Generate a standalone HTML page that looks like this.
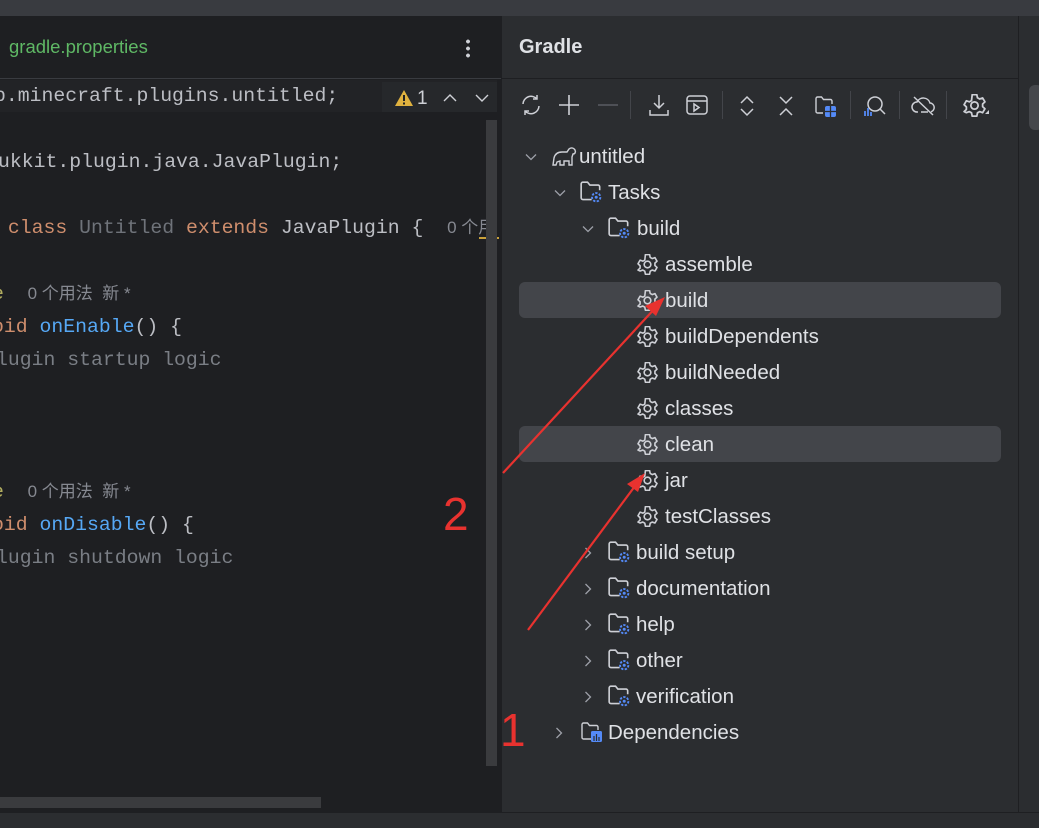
<!DOCTYPE html>
<html><head><meta charset="utf-8"><style>
*{margin:0;padding:0;box-sizing:border-box}
body{width:1039px;height:828px;overflow:hidden;background:#1e1f22;position:relative;font-family:"Liberation Sans","Noto Sans CJK SC",sans-serif}
.abs{position:absolute}
.code{position:absolute;font-family:"Liberation Mono","Noto Sans CJK SC",monospace;font-size:19.8px;color:#bcbec4;white-space:pre;line-height:24px}
.kw{color:#cf8e6d}.fn{color:#56a8f5}.cm{color:#7a7e85}.gr{color:#6f737a}.hint{color:#868991;font-family:"Liberation Sans","Noto Sans CJK SC",sans-serif;font-size:17px}.ann{color:#b3ae60}
.row{position:absolute;height:36px;line-height:36px;font-size:20.5px;color:#dfe1e5;white-space:nowrap}
.sel{position:absolute;left:519px;width:482px;height:36px;background:#43454a;border-radius:6px}
svg{position:absolute;overflow:visible}
</style></head><body>
<svg width="0" height="0" style="position:absolute">
<symbol id="gear" viewBox="1.5 1.5 17 17"><path d="M8.3 2h3.4l.5 2.3 1.6.9 2.2-.8 1.7 2.9-1.7 1.6v1.9l1.7 1.6-1.7 2.9-2.2-.8-1.6.9-.5 2.5H8.3l-.5-2.5-1.6-.9-2.2.8L2.3 14.5 4 12.9V11L2.3 9.4 4 6.5l2.2.8 1.6-.9z" fill="none" stroke="#ced0d6" stroke-width="1.3" stroke-linejoin="round"/><circle cx="10" cy="10" r="2.7" fill="none" stroke="#ced0d6" stroke-width="1.3"/></symbol>
<symbol id="fold" viewBox="1 1 19 19"><path d="M11 17H3.5a1.5 1.5 0 0 1-1.5-1.5v-12A1.5 1.5 0 0 1 3.5 2h4l2 2.5h7a1.5 1.5 0 0 1 1.5 1.5v3" fill="none" stroke="#ced0d6" stroke-width="1.4"/><circle cx="15" cy="15" r="3.6" fill="none" stroke="#548af7" stroke-width="1.6" stroke-dasharray="2 1.2"/><circle cx="15" cy="15" r="1.3" fill="#548af7"/></symbol>
<symbol id="chd" viewBox="0 0 12 12"><path d="M1 3.5l5 5 5-5" fill="none" stroke="#9da0a8" stroke-width="1.3"/></symbol>
<symbol id="chr" viewBox="0 0 12 12"><path d="M3.5 1l5 5-5 5" fill="none" stroke="#9da0a8" stroke-width="1.3"/></symbol>
</svg>
<div class="abs" style="left:0;top:0;width:1039px;height:16px;background:#393b40"></div>
<div class="abs" style="left:0;top:16px;width:501px;height:63px;background:#1e1f22;border-bottom:1px solid #393b40"></div>
<div class="abs" style="left:9px;top:36px;font-size:18.5px;color:#5fb865">gradle.properties</div>
<div class="abs" style="left:466px;top:38px;width:4px;height:20px;background:radial-gradient(circle,#ced0d6 1.8px,transparent 2px) 0 0/4px 7px repeat-y"></div>
<div class="abs" style="left:0;top:80px;width:497px;height:32px;background:#222326"></div>
<div class="abs" style="left:382px;top:82px;width:115px;height:30px;background:#26282b"></div>
<svg style="left:394px;top:89px" width="20" height="18"><path d="M10 1L19 17H1z" fill="#e0b23f"/><rect x="9" y="6" width="2" height="6" fill="#222"/><rect x="9" y="13.5" width="2" height="2" fill="#222"/></svg>
<div class="abs" style="left:417px;top:88px;font-size:19px;color:#ced0d6">1</div>
<svg style="left:443px;top:94px" width="14" height="8"><path d="M1 7l6-6 6 6" fill="none" stroke="#ced0d6" stroke-width="1.4"/></svg>
<svg style="left:475px;top:94px" width="14" height="8"><path d="M1 1l6 6 6-6" fill="none" stroke="#ced0d6" stroke-width="1.4"/></svg>
<div class="code" style="left:-6px;top:84px">p.minecraft.plugins.untitled;</div>
<div class="code" style="left:-2px;top:150px">ukkit.plugin.java.JavaPlugin;</div>
<div class="code" style="left:-4px;top:216px"> <span class="kw">class</span> <span class="gr">Untitled</span> <span class="kw">extends</span> JavaPlugin {  <span class="hint">0 个用</span></div>
<div class="code" style="left:-8px;top:282px"><span class="ann">e</span>  <span class="hint">0 个用法  新 *</span></div>
<div class="code" style="left:-8px;top:315px"><span class="kw">oid</span> <span class="fn">onEnable</span>() {</div>
<div class="code" style="left:-4px;top:348px"><span class="cm">lugin startup logic</span></div>
<div class="code" style="left:-8px;top:480px"><span class="ann">e</span>  <span class="hint">0 个用法  新 *</span></div>
<div class="code" style="left:-8px;top:513px"><span class="kw">oid</span> <span class="fn">onDisable</span>() {</div>
<div class="code" style="left:-4px;top:546px"><span class="cm">lugin shutdown logic</span></div>
<div class="abs" style="left:479px;top:237px;width:20px;height:2px;background:#c9a13a"></div>
<div class="abs" style="left:486px;top:120px;width:11px;height:646px;background:#3a3b3e"></div>
<div class="abs" style="left:0;top:797px;width:321px;height:11px;background:#3a3b3e"></div>
<div class="abs" style="left:501px;top:16px;width:517px;height:796px;background:#2b2d30;border-left:1px solid #1e1f22"></div>
<div class="abs" style="left:501px;top:78px;width:517px;height:1px;background:#1e1f22"></div>
<div class="abs" style="left:519px;top:36px;font-size:20px;font-weight:bold;color:#dfe1e5">Gradle</div>
<div class="abs" style="left:1018px;top:16px;width:21px;height:796px;background:#2b2d30;border-left:1px solid #1e1f22"></div>
<div class="abs" style="left:1029px;top:85px;width:14px;height:45px;background:#45474b;border-radius:6px"></div>
<div class="abs" style="left:0;top:812px;width:1039px;height:16px;background:#2b2d30;border-top:1px solid #1e1f22"></div>
<svg style="left:518px;top:93px" width="26" height="24" fill="none" stroke="#ced0d6" stroke-width="1.5"><path d="M5 11a8 8 0 0 1 14-5M21 13a8 8 0 0 1-14 5"/><path d="M19 2v4h-4M7 22v-4h4" /></svg>
<svg style="left:558px;top:94px" width="22" height="22" stroke="#ced0d6" stroke-width="1.6"><path d="M11 1v20M1 11h20"/></svg>
<svg style="left:597px;top:94px" width="22" height="22" stroke="#5a5d63" stroke-width="1.6"><path d="M1 11h20"/></svg>
<div class="abs" style="left:630px;top:91px;width:1px;height:28px;background:#43454a"></div>
<svg style="left:648px;top:93px" width="22" height="24" fill="none" stroke="#ced0d6" stroke-width="1.5"><path d="M11 2v13M6 10l5 5 5-5M2 17v5h18v-5"/></svg>
<svg style="left:686px;top:95px" width="24" height="22" fill="none" stroke="#ced0d6" stroke-width="1.5"><rect x="1" y="1" width="20" height="18" rx="3"/><path d="M1 6h20M8 9v7l5-3.5z"/></svg>
<div class="abs" style="left:722px;top:91px;width:1px;height:28px;background:#43454a"></div>
<svg style="left:738px;top:95px" width="18" height="22" fill="none" stroke="#ced0d6" stroke-width="1.5"><path d="M3 8l6-6 6 6M3 14l6 6 6-6"/></svg>
<svg style="left:777px;top:95px" width="18" height="22" fill="none" stroke="#ced0d6" stroke-width="1.5"><path d="M3 2l6 6 6-6M3 20l6-6 6 6"/></svg>
<svg style="left:814px;top:95px" width="26" height="24"><path d="M9 18H3.5A1.5 1.5 0 0 1 2 16.5v-13A1.5 1.5 0 0 1 3.5 2h4l2 2.5h7A1.5 1.5 0 0 1 18 6v3" fill="none" stroke="#ced0d6" stroke-width="1.4"/><rect x="11" y="11" width="11" height="11" rx="2" fill="#548af7"/><path d="M16.5 11v11M11 16.5h11" stroke="#2b2d30" stroke-width="1.3"/></svg>
<div class="abs" style="left:850px;top:91px;width:1px;height:28px;background:#43454a"></div>
<svg style="left:862px;top:94px" width="26" height="24" fill="none"><circle cx="13" cy="10" r="7" stroke="#ced0d6" stroke-width="1.5"/><path d="M18 15l5 5" stroke="#ced0d6" stroke-width="1.5"/><path d="M3 22v-5M6 22v-8M9 22v-4" stroke="#548af7" stroke-width="1.8"/></svg>
<div class="abs" style="left:899px;top:91px;width:1px;height:28px;background:#43454a"></div>
<svg style="left:911px;top:95px" width="26" height="22" fill="none" stroke="#ced0d6" stroke-width="1.5"><path d="M7 17H6a5 5 0 0 1 0-10 7 7 0 0 1 13 1 4.5 4.5 0 0 1 1 8.8M10 17h7M3 2l19 18"/></svg>
<div class="abs" style="left:946px;top:91px;width:1px;height:28px;background:#43454a"></div>
<svg style="left:963px;top:94px" width="24" height="24"><use href="#gear" x="0" y="0" width="23" height="23"/><path d="M22 20l4-4v4z" fill="#ced0d6"/></svg>
<div class="sel" style="top:282px"></div>
<div class="sel" style="top:426px"></div>
<svg style="left:525px;top:151px" width="12" height="12"><use href="#chd"/></svg>
<svg style="left:551px;top:145px" width="26" height="22" fill="none" stroke="#ced0d6" stroke-width="1.4"><path d="M2 20l1-7c1-4 4-6 8-6h5l2-3c2-2 5-1 6 1s0 4-2 4l-1 3v8h-3v-4h-5v4H9v-4l-3 1-1 3z"/></svg>
<div class="row" style="left:579px;top:139px">untitled</div>
<svg style="left:554px;top:187px" width="12" height="12"><use href="#chd"/></svg>
<svg style="left:580px;top:181px" width="22" height="22"><use href="#fold"/></svg>
<div class="row" style="left:608px;top:175px">Tasks</div>
<svg style="left:582px;top:223px" width="12" height="12"><use href="#chd"/></svg>
<svg style="left:608px;top:217px" width="22" height="22"><use href="#fold"/></svg>
<div class="row" style="left:637px;top:211px">build</div>

<svg style="left:637px;top:254px" width="21" height="21"><use href="#gear"/></svg><div class="row" style="left:665px;top:247px">assemble</div>
<svg style="left:637px;top:290px" width="21" height="21"><use href="#gear"/></svg><div class="row" style="left:665px;top:283px">build</div>
<svg style="left:637px;top:326px" width="21" height="21"><use href="#gear"/></svg><div class="row" style="left:665px;top:319px">buildDependents</div>
<svg style="left:637px;top:362px" width="21" height="21"><use href="#gear"/></svg><div class="row" style="left:665px;top:355px">buildNeeded</div>
<svg style="left:637px;top:398px" width="21" height="21"><use href="#gear"/></svg><div class="row" style="left:665px;top:391px">classes</div>
<svg style="left:637px;top:434px" width="21" height="21"><use href="#gear"/></svg><div class="row" style="left:665px;top:427px">clean</div>
<svg style="left:637px;top:470px" width="21" height="21"><use href="#gear"/></svg><div class="row" style="left:665px;top:463px">jar</div>
<svg style="left:637px;top:506px" width="21" height="21"><use href="#gear"/></svg><div class="row" style="left:665px;top:499px">testClasses</div>

<svg style="left:582px;top:547px" width="12" height="12"><use href="#chr"/></svg><svg style="left:608px;top:541px" width="22" height="22"><use href="#fold"/></svg><div class="row" style="left:636px;top:535px">build setup</div>
<svg style="left:582px;top:583px" width="12" height="12"><use href="#chr"/></svg><svg style="left:608px;top:577px" width="22" height="22"><use href="#fold"/></svg><div class="row" style="left:636px;top:571px">documentation</div>
<svg style="left:582px;top:619px" width="12" height="12"><use href="#chr"/></svg><svg style="left:608px;top:613px" width="22" height="22"><use href="#fold"/></svg><div class="row" style="left:636px;top:607px">help</div>
<svg style="left:582px;top:655px" width="12" height="12"><use href="#chr"/></svg><svg style="left:608px;top:649px" width="22" height="22"><use href="#fold"/></svg><div class="row" style="left:636px;top:643px">other</div>
<svg style="left:582px;top:691px" width="12" height="12"><use href="#chr"/></svg><svg style="left:608px;top:685px" width="22" height="22"><use href="#fold"/></svg><div class="row" style="left:636px;top:679px">verification</div>
<svg style="left:553px;top:727px" width="12" height="12"><use href="#chr"/></svg>
<svg style="left:580px;top:721px" width="24" height="22"><path d="M11 18H3.5A1.5 1.5 0 0 1 2 16.5v-13A1.5 1.5 0 0 1 3.5 2h4l2 2.5h7A1.5 1.5 0 0 1 18 6v3" fill="none" stroke="#ced0d6" stroke-width="1.4"/><rect x="11" y="10" width="11" height="11" rx="1.5" fill="#548af7"/><path d="M14 20v-5M16.5 20v-7M19 20v-4" stroke="#2b2d30" stroke-width="1.2"/></svg>
<div class="row" style="left:608px;top:715px">Dependencies</div>

<svg style="left:0;top:0" width="1039" height="828">
<path d="M503 473L658 305" stroke="#e8322f" stroke-width="2.2"/><path d="M665 297L645 306L656 316z" fill="#e8322f"/>
<path d="M528 630L638 482" stroke="#e8322f" stroke-width="2.2"/><path d="M645 473L627 484L638 492z" fill="#e8322f"/>
<text x="443" y="530" font-family="Liberation Sans,sans-serif" font-size="46" fill="#e8322f">2</text>
<text x="500" y="746" font-family="Liberation Sans,sans-serif" font-size="46" fill="#e8322f">1</text>
</svg>
</body></html>
